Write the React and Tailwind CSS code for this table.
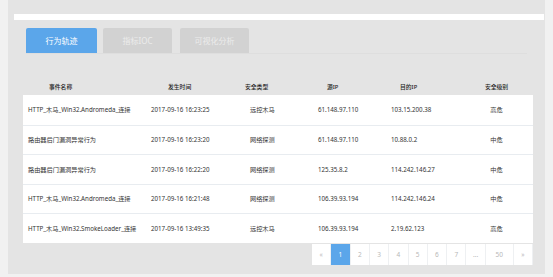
const rows = [
  ["HTTP_木马_Win32.Andromeda_连接", "2017-09-16 16:23:25", "远控木马", "61.148.97.110", "103.15.200.38", "高危"],
  ["路由器后门漏洞异常行为", "2017-09-16 16:23:20", "网络探测", "61.148.97.110", "10.88.0.2", "中危"],
  ["路由器后门漏洞异常行为", "2017-09-16 16:22:20", "网络探测", "125.35.8.2", "114.242.146.27", "中危"],
  ["HTTP_木马_Win32.Andromeda_连接", "2017-09-16 16:21:48", "网络探测", "106.39.93.194", "114.242.146.24", "中危"],
  ["HTTP_木马_Win32.SmokeLoader_连接", "2017-09-16 13:49:35", "远控木马", "106.39.93.194", "2.19.62.123", "高危"],
];

const pages = ["«", "1", "2", "3", "4", "5", "6", "7", "...", "50", "»"];

function App() {
  return (
    <div
      className="w-[553px] h-[277px] bg-[#f1f1f1] overflow-hidden"
      style={{ fontFamily: '"Noto Sans", "Noto Sans CJK SC", sans-serif' }}
    >
      <div className="ml-[8px] w-[537px] h-[274px] bg-[#e4e4e4] pt-[14px]">
        {/* top bar */}
        <div className="ml-[6px] w-[530px] h-[6px] bg-white" />

        {/* tabs */}
        <div className="ml-[18px] mt-[8px] w-[501px] flex gap-[6px] border-b border-[#dedede]">
          <div className="w-[71px] h-[25px] rounded-t-[2px] bg-[#5ba6ea] text-white text-[8px] flex items-center justify-center">
            行为轨迹
          </div>
          <div className="w-[69px] h-[25px] rounded-t-[2px] bg-[#d2d2d2] text-[#ececec] text-[8px] flex items-center justify-center">
            指标IOC
          </div>
          <div className="ml-[2px] w-[69px] h-[25px] rounded-t-[2px] bg-[#d2d2d2] text-[#ececec] text-[8px] flex items-center justify-center">
            可视化分析
          </div>
        </div>

        {/* table */}
        <div className="ml-[15px] mt-[26px] w-[510px]">
          <div className="grid grid-cols-[123px_99px_68px_73px_74px_73px] h-[15px] items-center text-[5.8px] font-medium text-[#222]">
            <div className="pl-[26px]">事件名称</div>
            <div className="pl-[22px]">发生时间</div>
            <div className="pl-[0px]">安全类型</div>
            <div className="pl-[14px]">源IP</div>
            <div className="pl-[14px]">目的IP</div>
            <div className="text-center">安全级别</div>
          </div>
          <div className="bg-white">
            {rows.map((r, i) => (
              <div
                key={i}
                className={
                  "grid grid-cols-[123px_99px_68px_73px_74px_73px] h-[29.6px] items-center text-[6.2px] text-[#333] " +
                  (i > 0 ? "border-t border-[#e8ecf0]" : "")
                }
              >
                <div className="pl-[5px] whitespace-nowrap">{r[0]}</div>
                <div className="pl-[5px] whitespace-nowrap">{r[1]}</div>
                <div className="pl-[5px]">{r[2]}</div>
                <div className="pl-[5px]">{r[3]}</div>
                <div className="pl-[5px]">{r[4]}</div>
                <div className="text-center">{r[5]}</div>
              </div>
            ))}
          </div>

          {/* pagination */}
          <div className="mt-[1px] flex justify-end">
            <div className="flex bg-white h-[21px]">
              {pages.map((p, i) => (
                <div
                  key={i}
                  className={
                    "h-[21px] flex items-center justify-center text-[6.5px] border-r border-[#eef0f2] " +
                    (p === "50" ? "w-[28px] " : "w-[19.3px] ") +
                    (p === "1" ? "bg-[#5ba6ea] text-white" : "text-[#b8b8b8]")
                  }
                >
                  {p}
                </div>
              ))}
            </div>
          </div>
        </div>
      </div>
    </div>
  );
}

export default App;
